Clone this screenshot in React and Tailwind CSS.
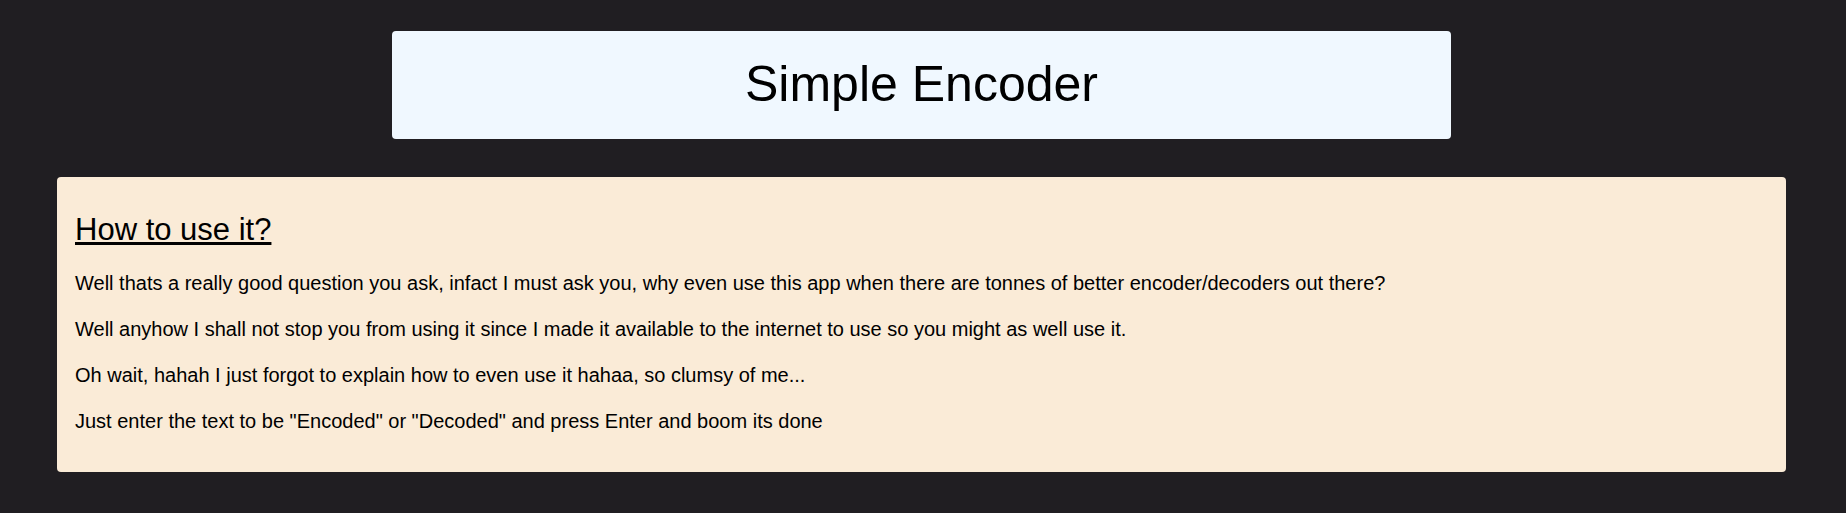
export default function App() {
  const lines = [
    "Well thats a really good question you ask, infact I must ask you, why even use this app when there are tonnes of better encoder/decoders out there?",
    "Well anyhow I shall not stop you from using it since I made it available to the internet to use so you might as well use it.",
    "Oh wait, hahah I just forgot to explain how to even use it hahaa, so clumsy of me...",
    'Just enter the text to be "Encoded" or "Decoded" and press Enter and boom its done',
  ];

  return (
    <div className="min-h-[513px] bg-[#201e22] pt-[31px] pb-[41px] font-['Liberation_Sans',Arial,sans-serif] text-black">
      <div className="ml-[392px] w-[1059px] rounded bg-[#f0f8ff] pt-[25px] pb-[27px] text-center">
        <h1 className="text-[50px] leading-[56px]">Simple Encoder</h1>
      </div>

      <div className="mt-[38px] ml-[57px] w-[1729px] rounded bg-[#faebd7] pt-[35px] pb-[38px] pl-[18px] pr-[18px]">
        <h2 className="text-[31px] leading-[36px] underline">How to use it?</h2>
        <div className="mt-[23px] flex flex-col gap-[21px]">
          {lines.map((l) => (
            <p key={l} className="text-[20px] leading-[25px]">
              {l}
            </p>
          ))}
        </div>
      </div>
    </div>
  );
}
